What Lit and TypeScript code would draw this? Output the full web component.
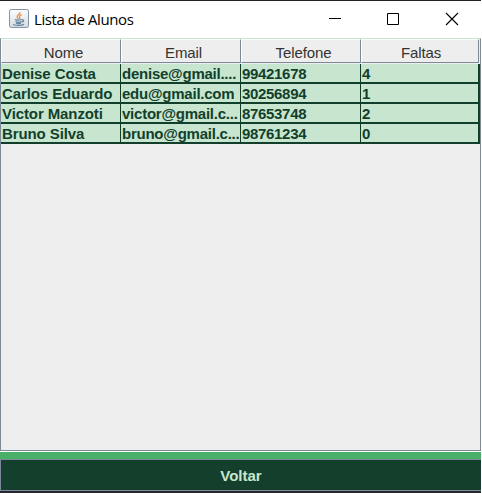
import { LitElement, html, css } from "lit";
import { customElement, property } from "lit/decorators.js";

const columns = ["Nome", "Email", "Telefone", "Faltas"];
const students = [
  ["Denise Costa", "denise@gmail....", "99421678", "4"],
  ["Carlos Eduardo", "edu@gmail.com", "30256894", "1"],
  ["Victor Manzoti", "victor@gmail.c...", "87653748", "2"],
  ["Bruno Silva", "bruno@gmail.c...", "98761234", "0"],
];

@customElement("title-bar")
class TitleBar extends LitElement {
  @property() label = "";
  static styles = css`
    :host { display: flex; height: 37px; align-items: center; background: #fff; color: #000; font-family: "Open Sans", "Noto Sans", sans-serif; }
    .logo { width: 20px; height: 20px; margin: 0 5px 2px 9px; flex: none; }
    .label { flex: 1; font-size: 15px; letter-spacing: -0.42px; line-height: 20px; padding-bottom: 1px; white-space: nowrap; }
    .controls { display: flex; flex: none; margin-right: 1px; }
    .controls svg { display: block; width: 58px; height: 37px; }
  `;
  render() {
    return html`
      <svg class="logo" viewBox="0 0 20 20">
        <defs>
          <linearGradient id="g" x1="0" y1="0" x2="0" y2="1">
            <stop offset="0" stop-color="#fdfdfd" /><stop offset="1" stop-color="#d3dce4" />
          </linearGradient>
        </defs>
        <rect x="0.5" y="0.5" width="19" height="18" rx="1.8" fill="url(#g)" stroke="#8293a3" />
        <path d="M11.2 3C11.6 5 7.5 6 8.2 8C8.5 8.8 9 9.2 9.5 9.8M12.6 5.6C10.4 6.5 10 7.5 10.8 8.3C11.3 8.9 10.9 9.5 10.5 10" fill="none" stroke="#e98c45" stroke-width="1.3" />
        <path d="M6 10.5C7 11.3 11 11.3 13 10.5M6.5 12.5C8 13.3 11 13.3 12.5 12.5M7 14C8 14.8 11 14.8 12 14M13 11C15.3 10.3 15.3 12.6 12.8 13.2M4.5 15C3.5 16.7 13 17 15 15.3" fill="none" stroke="#6485a1" stroke-width="1.2" />
      </svg>
      <span class="label">${this.label}</span>
      <div class="controls">
        <svg viewBox="0 0 58 37"><path d="M23 17.5h12" stroke="#000" /></svg>
        <svg viewBox="0 0 58 37"><path d="M23.5 12.5h11v11h-11z" fill="none" stroke="#000" /></svg>
        <svg viewBox="0 0 58 37"><path d="M24 12L36 24M36 12L24 24" stroke="#000" stroke-width="1.1" /></svg>
      </div>
    `;
  }
}

@customElement("student-table")
class StudentTable extends LitElement {
  static styles = css`
    :host { display: block; box-sizing: border-box; height: 413px; border-left: 1px solid #7a8a99; border-right: 1px solid #7a8a99; border-bottom: 1px solid #7a8a99; border-top: 1px solid #c8e6cf; background: #eee; }
    .head, .row { display: grid; grid-template-columns: repeat(3, 120px) 119px; }
    .head { height: 25px; background: #eee; }
    .head span { box-sizing: border-box; height: 24px; border: 1px solid #7a8a99; border-top-color: #fff; border-left-color: #fff; color: #333; font: 15px/26px "Liberation Sans", Arial, sans-serif; letter-spacing: -0.1px; text-align: center; padding-left: 5px; }
    .head span:last-child { width: 118px; padding-left: 2px; }
    .row { height: 20px; width: 479px; background: #c8e6cf; }
    .cell { box-sizing: border-box; height: 20px; border-right: 1px solid #123f2c; border-bottom: 2px solid #123f2c; padding-left: 1px; color: #123f2c; font: bold 15px/20px "Liberation Sans", Arial, sans-serif; letter-spacing: -0.1px; white-space: nowrap; }
    .cell:nth-child(2) { letter-spacing: -0.24px; }
    .cell:nth-child(3) { letter-spacing: -0.32px; }
    .cell:last-child { border-right-width: 2px; }
  `;
  render() {
    return html`
      <div class="head">${columns.map((c) => html`<span>${c}</span>`)}</div>
      ${students.map((s) => html`<div class="row">${s.map((v) => html`<div class="cell">${v}</div>`)}</div>`)}
    `;
  }
}

@customElement("app-root")
class AppRoot extends LitElement {
  static styles = css`
    :host { display: block; box-sizing: border-box; width: 482px; height: 493px; padding-right: 1px; background: #fff; overflow: hidden; }
    .window { display: flex; flex-direction: column; border-top: 1px solid #222024; }
    .strip { height: 7px; background: #4aaf69; border-top: 1px solid #fff; }
    .back { all: unset; box-sizing: border-box; height: 32px; border: 1px solid #7a8a99; border-right: 0; background: #133f2c; color: #c8e6cf; text-align: center; font: bold 15px/31px "Liberation Sans", Arial, sans-serif; }
    .edge { height: 2px; background: #29272e; }
  `;
  render() {
    return html`
      <div class="window">
        <title-bar label="Lista de Alunos"></title-bar>
        <student-table></student-table>
        <div class="strip"></div>
        <button class="back">Voltar</button>
        <div class="edge"></div>
      </div>
    `;
  }
}
